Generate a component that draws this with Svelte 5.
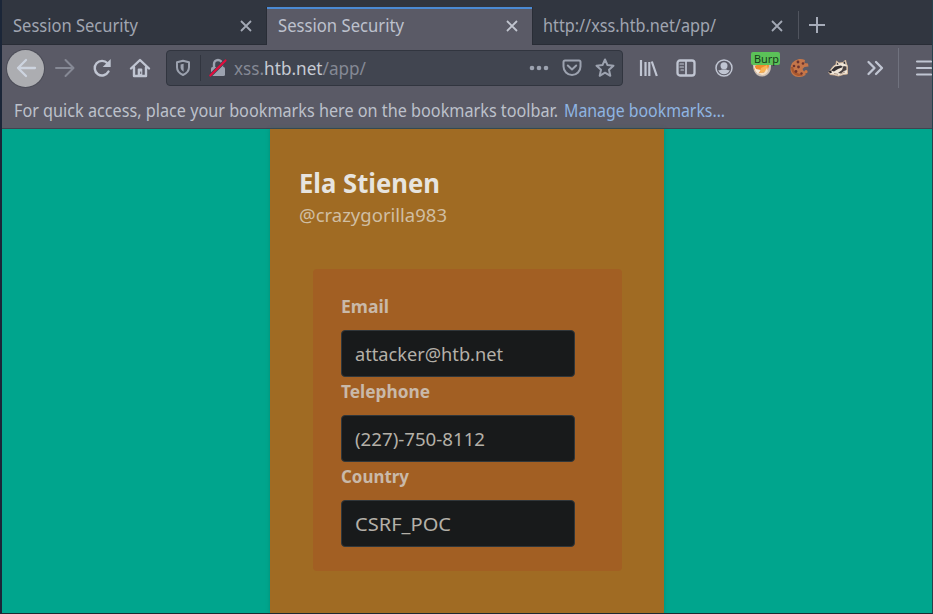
<script>
  const tabs = [
    { title: 'Session Security', width: 265, textWidth: 125, active: false },
    { title: 'Session Security', width: 265, textWidth: 126, active: true },
    { title: 'http://xss.htb.net/app/', width: 266, textWidth: 173, active: false }
  ];
  const fields = [
    { label: 'Email', labelWidth: 48, value: 'attacker@htb.net', valueWidth: 148 },
    { label: 'Telephone', labelWidth: 89, value: '(227)-750-8112', valueWidth: 130 },
    { label: 'Country', labelWidth: 68, value: 'CSRF_POC', valueWidth: 96 }
  ];
</script>

{#snippet line(text, width, kind)}
  <svg class="line {kind}" {width} height="28">
    <text x="0" y="20" textLength={width} lengthAdjust="spacingAndGlyphs">{text}</text>
  </svg>
{/snippet}

<div class="window">
  <div class="tabs">
    {#each tabs as tab}
      <div class="tab" class:active={tab.active} style:width="{tab.width}px">
        {@render line(tab.title, tab.textWidth, 'title')}
        <svg class="close" width="12" height="12" viewBox="0 0 12 12"><path d="M1 1l10 10M11 1L1 11" /></svg>
      </div>
    {/each}
    <div class="newtab">
      <svg width="18" height="18" viewBox="0 0 18 18"><path d="M9 1v16M1 9h16" /></svg>
    </div>
  </div>

  <div class="nav">
    <div class="back">
      <svg class="icon" width="20" height="20" viewBox="0 0 20 20"><path d="M19 10H2M10 2L2 10l8 8" /></svg>
    </div>
    <svg class="icon forward" width="20" height="20" viewBox="0 0 20 20"><path d="M1 10h17M10.500 2l8 8-8 8" /></svg>
    <svg class="icon reload" width="20" height="20" viewBox="0 0 20 20">
      <path d="M16.500 13.500A7.300 7.300 0 1 1 15.500 5.300" stroke-width="2.400" />
      <path class="solid" d="M18.700 1v8h-8z" />
    </svg>
    <svg class="icon home" width="20" height="20" viewBox="0 0 20 20">
      <path d="M1 10.500L10 2l9 8.500M4 9.500V18h12V9.500" stroke-width="2.400" />
      <path class="solid" d="M7.700 18v-6.500q0-1 1-1h2.600q1 0 1 1V18z" />
      <path d="M10.700 14v1.500" stroke="#5a5a66" stroke-width="1" />
    </svg>

    <div class="url">
      <svg class="icon shield" width="16" height="18" viewBox="0 0 16 18">
        <path d="M8 1.800l6 1.500v5c0 3.600-2.400 6.200-6 7.700-3.600-1.500-6-4.100-6-7.700v-5z" stroke-width="2" />
        <path class="solid" d="M8.600 4.800v8c-2-1.200-3-2.500-3-4.500V5.500z" />
      </svg>
      <span class="rule"></span>
      <svg class="icon lock" width="18" height="20" viewBox="0 0 18 20">
        <path d="M5 9V6a4 4 0 0 1 8 0v3" stroke-width="2.400" />
        <rect class="solid" x="2" y="9" width="14" height="9" rx="1.500" />
        <path d="M1.300 17.500L16.500 2.500" stroke="#414550" stroke-width="3.600" />
        <path d="M1.300 17.500L16.500 2.500" stroke="#e30d3d" stroke-width="2.200" />
      </svg>
      <svg class="line address" width="132" height="28">
        <text x="0" y="20" textLength="132" lengthAdjust="spacingAndGlyphs">xss.<tspan fill="#c7cbd4">htb.net</tspan>/app/</text>
      </svg>
      <svg class="icon dots" width="20" height="20" viewBox="0 0 20 20">
        <circle class="solid" cx="3" cy="10" r="2.300" /><circle class="solid" cx="10" cy="10" r="2.300" /><circle class="solid" cx="17" cy="10" r="2.300" />
      </svg>
      <svg class="icon pocket" width="20" height="20" viewBox="0 0 20 20">
        <path d="M3 2.500h14q1.500 0 1.500 1.500v4.500a8.500 8.500 0 0 1-17 0V4q0-1.500 1.500-1.500zM5.800 7.500L10 11.500l4.200-4" />
      </svg>
      <svg class="icon star" width="20" height="20" viewBox="0 0 20 20">
        <path d="M10 1.500l2.500 5.600 6 .6-4.500 4.100 1.300 6-5.300-3.100-5.300 3.100 1.300-6L1.500 7.700l6-.6z" />
      </svg>
    </div>

    <div class="tools">
      <svg class="icon" width="20" height="20" viewBox="0 0 20 20"><path d="M3 2v16M7.500 4v14M11.300 4v14M13.800 3.500L18.800 18" stroke-width="2.200" stroke-linecap="butt" /></svg>
      <svg class="icon" width="20" height="20" viewBox="0 0 20 20">
        <rect x="1.500" y="2.500" width="17" height="15" rx="2.500" stroke-width="2.300" />
        <path d="M10 3v14" stroke-width="1.700" />
        <path d="M4 6h3.500M4 9h3.500M5 12h2.500" stroke-width="1.200" />
      </svg>
      <svg class="icon account" width="20" height="20" viewBox="0 0 20 20">
        <circle cx="10" cy="10" r="8" stroke-width="1.500" />
        <circle class="solid" cx="10" cy="7.800" r="3.500" />
        <path class="solid" d="M4.200 12.200q3 .2 3.600-.6h4.400q.6.800 3.600.6Q14 16.200 10 16.200T4.200 12.200z" />
      </svg>
      <div class="fox">
        <svg width="20" height="20" viewBox="0 0 20 20">
          <path d="M1 6l2-2h14l2 2q.5 8-4 11-5 3-10 0Q.5 13 1 6z" fill="#cbbfb5" />
          <path d="M3 8q5-4 13-3l1 3-2 6-10 1-3-4z" fill="#ef8a2c" />
          <path d="M2 7l2 4 5 1-3 4q-4-3-4-9z" fill="#f8ead9" />
          <path d="M9 10l6-3 1 4-3 3-5 1z" fill="#f8b255" />
          <path d="M6 15l6 0 3-5 1 3q-2 4-6 4z" fill="#f7dfc2" />
        </svg>
        <span class="badge"><svg width="26" height="14"><text x="0" y="11" textLength="25" lengthAdjust="spacingAndGlyphs">Burp</text></svg></span>
      </div>
      <svg class="cookie" width="20" height="20" viewBox="0 0 20 20">
        <path d="M9 1q3-.5 6 1l-.5 3 3.500.5.500 3-4 .5-2 2 1 2 2 1v3q-3 2.500-7 2-7-.5-8-7Q0 3 9 1z" fill="#c4764a" />
        <path d="M1 9q0 7 7 9l5-.5-2-1.500q-7-1-8-7z" fill="#a9582e" />
        <g fill="#6b3430"><circle cx="8" cy="4" r="1.400" /><circle cx="4" cy="8" r="1.300" /><circle cx="8.500" cy="9" r="1.400" /><circle cx="6" cy="13.500" r="1.400" /><circle cx="11.500" cy="15.500" r="1.200" /><circle cx="13" cy="5.500" r="1.300" /></g>
        <circle cx="16" cy="13.700" r="1.600" fill="#cf7740" />
      </svg>
      <svg class="badger" width="20" height="20" viewBox="0 0 20 20">
        <path d="M.8 14.500L5 8.500l3-2 .5-3.500 2.500 2 4-.5L17.500 2l1 4 1 2v8l-4 .5-5 1.500-4-1-4.500-.5z" fill="#efe5d8" stroke="#d9b794" stroke-width=".8" />
        <path d="M3 12.500L7 8.500l6-1 2 1.500-5 2-4 2.500z" fill="#343033" />
        <path d="M9 4.500l1.800 1.700-2 .8zM15 5l2-1.700.5 3.200z" fill="#343033" />
        <path d="M15.500 8l3 .5v3.500l-2.500 1-3 2.500-3-.5 4-3z" fill="#4a4242" />
        <path d="M.8 13.300l2.200-.8 1 2-2.200 1z" fill="#272428" />
        <path d="M6 15.500l4 .8M12 16l5-2" stroke="#ad9684" stroke-width="1" />
      </svg>
      <svg class="icon" width="20" height="20" viewBox="0 0 20 20"><path d="M2.500 4l6 6-6 6M10 4l6 6-6 6" stroke-width="2.300" /></svg>
    </div>
    <span class="divider"></span>
    <svg class="icon menu" width="16" height="18" viewBox="0 0 16 18"><path d="M1 2.500h14M1 9h14M1 15.500h14" stroke-width="2.100" /></svg>
  </div>

  <div class="bookmarks">
    {@render line('For quick access, place your bookmarks here on the bookmarks toolbar.', 544, 'bar')}
    {@render line('Manage bookmarks…', 161, 'link')}
  </div>

  <main>
    <section class="profile">
      {@render line('Ela Stienen', 141, 'name')}
      {@render line('@crazygorilla983', 148, 'handle')}
      <div class="panel">
        {#each fields as field}
          <div class="field">
            {@render line(field.label, field.labelWidth, 'label')}
            <div class="input">{@render line(field.value, field.valueWidth, 'value')}</div>
          </div>
        {/each}
      </div>
    </section>
  </main>
</div>

<style>
  :global(body) { background: #1b2638; }
  * { box-sizing: border-box; }
  svg { display: block; flex: none; overflow: visible; }
  .window {
    width: 933px; height: 614px; display: flex; flex-direction: column; overflow: hidden;
    border-left: 2px solid #1b2638; border-right: 1px solid #27404b; border-bottom: 1px solid #1d2930;
    font-family: "Noto Sans", sans-serif; background: #5a5a66;
  }
  .line { font-size: 17.700px; fill: #bdc1cb; }
  .tabs { height: 45px; flex: none; padding-top: 7px; display: flex; background: #313640; border-bottom: 1px solid #292d36; }
  .tab { height: 37px; flex: none; display: flex; align-items: center; justify-content: space-between; padding: 0 15px 0 11px; }
  .tab.active { height: 38px; background: #5a5a66; border-top: 2px solid #4b8bd5; box-shadow: -1px 0 #292d36, 1px 0 #292d36; padding-bottom: 2px; padding-right: 14px; }
  .title { fill: #a0a5b1; margin-top: 0; }
  .active .title { fill: #bdc1cd; margin-top: -1px; }
  .close { fill: none; stroke: #a3a9b5; stroke-width: 1.800; }
  .active .close { stroke: #c2c6d0; }
  .newtab { height: 28px; margin-top: 4px; border-left: 1px solid #50545e; padding: 5px 0 0 9px; }
  .newtab path { stroke: #a6acb9; stroke-width: 2; }
  .nav { height: 46px; flex: none; display: flex; align-items: center; }
  .icon { fill: none; stroke: #c0c5d2; color: #c0c5d2; stroke-width: 2; stroke-linecap: round; stroke-linejoin: round; }
  .solid { fill: currentColor; stroke: none; }
  .back { width: 37px; height: 37px; margin-left: 5px; border-radius: 50%; display: flex; align-items: center; justify-content: center; background: #acadb1; box-shadow: 0 0 0 1px #4c4d58; }
  .back .icon { stroke: #cdd4df; stroke-width: 2.300; }
  .forward { margin-left: 11px; stroke: #868995; }
  .reload { margin-left: 17px; }
  .home { margin-left: 18px; }
  .url { width: 457px; height: 36px; margin-left: 16px; display: flex; align-items: center; background: #414550; border: 1px solid #31353f; border-radius: 4px; }
  .url .icon { stroke: #9ca2af; color: #9ca2af; }
  .url .shield { margin-left: 8px; }
  .rule { width: 1px; height: 26px; margin-left: 9px; background: #31353f; }
  .lock { margin-left: 8px; }
  .address { margin: 1px 163px 0 7px; fill: #858995; }
  .pocket { margin-left: 13px; }
  .star { margin-left: 13px; }
  .tools { height: 20px; margin-left: 15px; display: flex; align-items: center; }
  .tools > * + * { margin-left: 18px; }
  .fox { position: relative; }
  .badge { position: absolute; left: -1px; top: -6px; width: 29px; height: 13px; padding-left: 3px; background: #5bc158; border-radius: 2px; }
  .badge text { font-size: 11.500px; fill: #16391a; }
  .divider { width: 1px; height: 40px; margin-left: 12px; background: #70727e; }
  .menu { margin-left: 17px; }
  .bookmarks { height: 38px; flex: none; display: flex; padding: 6px 0 0 12px; gap: 6px; border-bottom: 1px solid #41434f; }
  .link { fill: #8fb5e2; }
  main { flex: 1; display: flex; justify-content: center; background: #00a58d; }
  .profile { width: 394px; height: 484px; padding: 44px 29px 0; background: #a06b23; box-shadow: 0 0 4px #006b5a66; }
  .name { font-size: 27.500px; font-weight: 700; fill: #e7e4df; }
  .handle { fill: #d0bea2; margin-top: 1px; }
  .panel { width: 309px; height: 302px; margin: 39px 0 0 14px; padding: 24px 28px; display: flex; flex-direction: column; background: #a25f23; border-radius: 4px; }
  .field { height: 85px; flex: none; }
  .label { font-weight: 700; fill: #c9b9a9; height: 37px; }
  .input { width: 234px; height: 47px; padding: 10px 13px 0; background: #181a1b; border: 1px solid #30363a; border-radius: 4px; }
  .value { fill: #b4b0a8; }
</style>
